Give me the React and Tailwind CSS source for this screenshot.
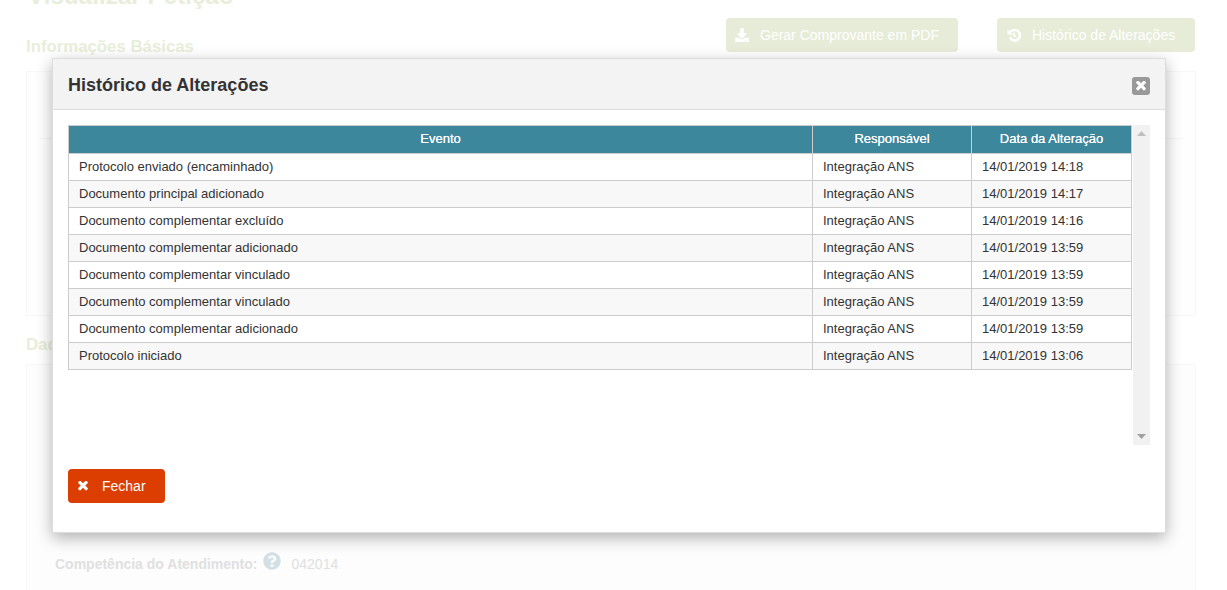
import React from "react";
import { FaDownload, FaQuestionCircle } from "react-icons/fa";

const rows = [
  ["Protocolo enviado (encaminhado)", "14/01/2019 14:18"],
  ["Documento principal adicionado", "14/01/2019 14:17"],
  ["Documento complementar excluído", "14/01/2019 14:16"],
  ["Documento complementar adicionado", "14/01/2019 13:59"],
  ["Documento complementar vinculado", "14/01/2019 13:59"],
  ["Documento complementar vinculado", "14/01/2019 13:59"],
  ["Documento complementar adicionado", "14/01/2019 13:59"],
  ["Protocolo iniciado", "14/01/2019 13:06"],
];

function Times({ className }) {
  return (
    <svg viewBox="100 300 1208 1208" className={className} fill="currentColor">
      <path d="M1298 1214q0 40-28 68l-136 136q-28 28-68 28t-68-28l-294-294-294 294q-28 28-68 28t-68-28l-136-136q-28-28-28-68t28-68l294-294-294-294q-28-28-28-68t28-68l136-136q28-28 68-28t68 28l294 294 294-294q28-28 68-28t68 28l136 136q28 28 28 68t-28 68l-294 294 294 294q28 28 28 68z" />
    </svg>
  );
}

function History({ className }) {
  return (
    <svg viewBox="0 0 24 24" className={className} fill="none" stroke="currentColor" strokeWidth="4.4">
      <path d="M6 7A9 9 0 1 1 5 16" />
      <path d="M1 2L10 11H1Z" fill="currentColor" stroke="none" />
      <path d="M12 8v5l3.5 2" strokeWidth="3.2" />
    </svg>
  );
}

function FadedButton({ icon, label, className }) {
  return (
    <div className={`h-[34px] rounded-[4px] bg-[#e6ecd7] text-white text-[14px] flex items-center ${className}`}>
      <span className="w-[25px] flex justify-start text-[14px]">{icon}</span>
      <span>{label}</span>
    </div>
  );
}

export default function App() {
  return (
    <div className="relative h-[590px] w-[1227px] overflow-hidden bg-white font-['Liberation_Sans',Arial,sans-serif]">
      <div className="px-[26px] pr-[31px]">
        <div className="h-[71px] relative">
          <h1 className="absolute -top-[17px] left-[2px] text-[24px] leading-[26px] font-bold text-[#e8eed9] tracking-[0.12px]">Visualizar Petição</h1>
          <h2 className="absolute top-[38px] left-0 text-[16.8px] leading-[18px] font-bold text-[#e8eed9]">Informações Básicas</h2>
          <div className="absolute top-[18px] right-[1px] flex gap-[39px]">
            <FadedButton className="w-[232px] pl-[9px]" icon={<FaDownload />} label="Gerar Comprovante em PDF" />
            <FadedButton className="w-[198px] pl-[10px]" icon={<History className="size-[14px]" />} label="Histórico de Alterações" />
          </div>
        </div>
        <div className="h-[245px] border border-[#f7f7f7] bg-[#fefefe] px-[13px]">
          <div className="mt-[66px] h-px bg-[#f5f5f5]" />
        </div>
        <h2 className="mt-[20px] h-[28px] text-[16.8px] leading-[18px] font-bold text-[#e8eed9]">Dados</h2>
        <div className="h-[230px] border border-[#f7f7f7] bg-[#fdfdfd] pl-[28px] pt-[187px] flex items-start gap-[5px] text-[14px] leading-[24px]">
          <span className="font-bold text-[#e0e0e0]">Competência do Atendimento:</span>
          <FaQuestionCircle className="text-[#d2e0e5] text-[18px] mt-0" />
          <span className="ml-[6px] text-[#e0e0e0]">042014</span>
        </div>
      </div>

      <div className="absolute left-[52px] top-[58px] h-[475px] w-[1114px] border border-[#dddddd] bg-white shadow-[0_5px_15px_rgba(0,0,0,0.3)]">
        <div className="h-[51px] flex items-center justify-between border-b border-[#dddddd] bg-[#f3f3f3] pl-[15px] pr-[15px]">
          <h3 className="mt-[2px] text-[18px] font-bold text-[#333333]">Histórico de Alterações</h3>
          <div className="mt-[3px] size-[18px] rounded-[3px] bg-[#999999] flex items-center justify-center text-white">
            <Times className="size-[10px]" />
          </div>
        </div>
        <div className="flex pl-[15px] pr-[15px] pt-[15px]">
          <div className="h-[320px] w-[1064px]">
            <table className="w-full table-fixed border-collapse text-[13px] text-[#333333] border border-[#cccccc]">
              <colgroup>
                <col className="w-[744px]" />
                <col className="w-[159px]" />
                <col className="w-[160px]" />
              </colgroup>
              <thead>
                <tr className="h-[28px] bg-[#3d879d] text-white">
                  <th className="border-x border-b border-[#cccccc] font-normal pb-px [text-shadow:0_0_0.4px_#fff]">Evento</th>
                  <th className="border-x border-b border-[#cccccc] font-normal pb-px [text-shadow:0_0_0.4px_#fff]">Responsável</th>
                  <th className="border-x border-b border-[#cccccc] font-normal pb-px [text-shadow:0_0_0.4px_#fff]">Data da Alteração</th>
                </tr>
              </thead>
              <tbody>
                {rows.map(([evento, data], i) => (
                  <tr key={i} className={`h-[27px] ${i % 2 ? "bg-[#f8f8f8]" : "bg-white"}`}>
                    <td className="border border-[#cccccc] px-[10px]">{evento}</td>
                    <td className="border border-[#cccccc] px-[10px]">Integração ANS</td>
                    <td className="border border-[#cccccc] px-[10px]">{data}</td>
                  </tr>
                ))}
              </tbody>
            </table>
          </div>
          <div className="ml-px h-[320px] w-[17px] bg-[#f1f1f1] flex flex-col items-center justify-between py-[6px]">
            <svg width="9" height="5" viewBox="0 0 9 5"><path d="M4.5 0L9 5H0z" fill="#c0c0c0" /></svg>
            <svg width="9" height="5" viewBox="0 0 9 5"><path d="M4.5 5L9 0H0z" fill="#a0a0a0" /></svg>
          </div>
        </div>
        <div className="pl-[15px] pt-[24px]">
          <button className="h-[34px] w-[97px] rounded-[4px] bg-[#dc3d00] text-white text-[14px] flex items-center pl-[10px]">
            <Times className="size-[10px] mr-[14px]" />
            Fechar
          </button>
        </div>
      </div>
    </div>
  );
}
